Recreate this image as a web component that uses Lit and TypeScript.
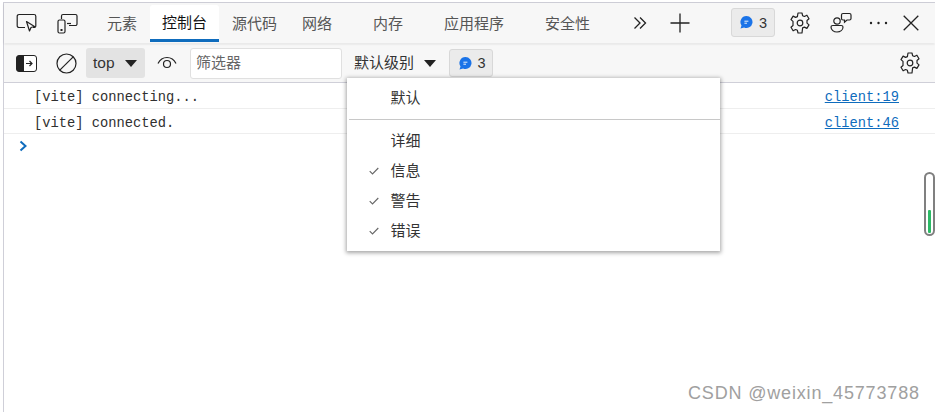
import { LitElement, html, css } from "lit";
import { customElement } from "lit/decorators.js";

const gear = html`<svg class="ic" width="22" height="22" viewBox="0 0 22 22" fill="none" stroke="#222" stroke-width="1.2"><path d="M9 1h4l.6 2.700 1.800.8 2.500-1.300 2.100 3.500-2 1.800v2.600l2 1.800-2.100 3.500-2.500-1.300-1.800.8L13 21H9l-.6-2.700-1.800-.8-2.500 1.300-2.100-3.500 2-1.800V9.400l-2-1.800 2.100-3.500 2.500 1.300 1.800-.8z" stroke-linejoin="round"/><circle cx="11" cy="11" r="2.800"/></svg>`;
const bubble = html`<svg width="13" height="13" viewBox="0 0 13 13"><path d="M6.500 0a6 6 0 1 1-2.400 11.500L.5 12.600l1-3.200A6 6 0 0 1 6.500 0z" fill="#1a73e8"/><path d="M4.400 5.200h4M4.400 7.200h2.600" stroke="#fff" stroke-width=".9"/></svg>`;
const check = html`<svg class="check" width="10" height="8" viewBox="0 0 10 8" fill="none" stroke="#666" stroke-width="1.100"><path d="M.7 4.200l2.800 2.800L9.300 1"/></svg>`;

@customElement("app-root")
export class AppRoot extends LitElement {
  static styles = css`
    :host { display: block; width: 935px; height: 412px; position: relative; overflow: hidden; background: #fff;
      font-family: "Noto Sans CJK SC", "Liberation Sans", sans-serif; color: #222; }
    .frame { margin: 2px 0 0 3px; height: 410px; border-top: 1px solid #cfcfd8; border-left: 1px solid #cfcfd8; display: flex; flex-direction: column; box-sizing: border-box; }
    .tabbar { height: 40px; flex: none; background: #f7f7f7; display: flex; align-items: flex-end; box-shadow: 0 1px 2px rgba(0,0,0,.12); position: relative; z-index: 1; }
    .tb-left { display: flex; align-self: center; gap: 20px; padding-left: 12px; width: 79px; box-sizing: border-box; margin-right: 12px; }
    .tab { height: 37px; margin-bottom: 1px; box-sizing: border-box; padding: 0 12px 2px; margin-right: 1px; display: flex; align-items: center; font-size: 15px; line-height: 20px; color: #555; white-space: nowrap; }
    .tab.net { margin-right: 0; padding-right: 20.5px; }
    .tab.wide { padding: 0 20.5px 2px; margin-right: 0; }
    .tab.active { background: #fff; color: #111; border-bottom: 3px solid #0f6cbd; border-radius: 3px 3px 0 0; padding-bottom: 0; }
    .tb-right { display: flex; align-self: stretch; align-items: center; flex: 1; position: relative; padding-bottom: 1px; box-sizing: border-box; }
    .more { margin-left: 22px; }
    .plus { margin-left: 23px; }
    .counter { display: inline-flex; align-items: center; gap: 6px; box-sizing: border-box; height: 29px; background: #ebebeb; border: 1px solid #d8d8d8; border-radius: 3px; font: 14.5px "Liberation Sans", sans-serif; padding: 0 0 0 8.500px; color: #333; }
    .counter.top { width: 44px; margin-left: 41px; }
    .r1 { margin-left: 14px; display: block; }
    .r2 { margin-left: 19px; display: block; }
    .r3 { margin-left: 17px; display: block; }
    .r4 { margin-left: 15px; display: block; }
    .toolbar { height: 38px; flex: none; margin-top: 1px; background: #f7f7f7; border-bottom: 1px solid #cfcfd8; display: flex; align-items: center; position: relative; }
    .ic { display: block; flex: none; }
    .t1 { margin-left: 12px; }
    .t2 { margin-left: 19px; }
    .top-sel { margin-left: 9px; width: 59px; height: 30px; background: #e3e3e3; border-radius: 3px; display: flex; align-items: center; box-sizing: border-box; padding-left: 7px; font: 15.5px "Liberation Sans", sans-serif; color: #333; }
    .arrow { width: 0; height: 0; border-left: 6px solid transparent; border-right: 6px solid transparent; border-top: 7px solid #222; display: inline-block; }
    .top-sel .arrow { margin-left: 10px; }
    .eye { margin-left: 12px; }
    .filter { margin-left: 13px; width: 152px; height: 31px; box-sizing: border-box; background: #fff; border: 1px solid #e0e0e0; border-radius: 3px; font-size: 15px; line-height: 20px; color: #666; display: flex; align-items: center; padding: 0 0 2px 5px; }
    .level { margin-left: 12px; font-size: 15px; line-height: 20px; color: #333; display: flex; align-items: center; padding-bottom: 2px; }
    .level .arrow { margin-left: 10px; margin-top: 3px; }
    .counter.low { width: 44px; height: 28px; margin-left: 13px; }
    .cog2 { margin-left: auto; margin-right: 14px; }
    .log { flex: 1; position: relative; font: 13.750px "Liberation Mono", monospace; color: #303030; }
    .row { height: 25px; box-sizing: border-box; border-bottom: 1px solid #eee; display: flex; align-items: center; justify-content: space-between; padding: 4px 36px 0 30px; }
    .row.one { height: 26px; }
    .row a { color: #0f6cbd; text-decoration: underline; }
    .prompt { display: block; margin: 6px 0 0 15px; }
    .scroll { position: absolute; right: 0; top: 89px; width: 11px; height: 64px; box-sizing: border-box; border: 2px solid #808080; border-radius: 6px; background: #fff; padding: 36px 2px 1px; }
    .scroll div { height: 100%; background: #2cba66; border-radius: 1px; }
    .menu { position: absolute; left: 347px; top: 78px; width: 373px; height: 173px; background: #fff; box-shadow: 0 1px 4px 1px rgba(0,0,0,.35); z-index: 5; font-size: 15px; line-height: 20px; color: #333; }
    .item { height: 30px; display: flex; align-items: center; position: relative; padding: 0 0 2px 43.5px; box-sizing: border-box; }
    .check { position: absolute; left: 22px; top: 11px; }
    .sep { height: 1px; background: #c8c8c8; margin: 6px 0 6px 2px; }
    .first { margin-top: 5px; }
    .wm { position: absolute; left: 688px; top: 383px; font: 18px "Liberation Sans", sans-serif; color: #a0a0a0; letter-spacing: .83px; z-index: 6; white-space: nowrap; }
  `;

  render() {
    return html`
      <div class="frame">
        <div class="tabbar">
          <div class="tb-left">
            <svg class="ic" width="21" height="19" viewBox="0 0 21 19" fill="none" stroke="#222" stroke-width="1.200"><path d="M9 14.500H3A1.800 1.800 0 0 1 1.200 12.700V3.300A1.800 1.800 0 0 1 3 1.500h15a1.800 1.800 0 0 1 1.800 1.800v9.400A1.800 1.800 0 0 1 18 14.500h-1"/><path d="M10.500 8.500l8 5-3.500 1-1.500 3.500z" fill="#f7f7f7" stroke-linejoin="round"/></svg>
            <svg class="ic" width="21" height="21" viewBox="0 0 21 21" fill="none" stroke="#222" stroke-width="1.200"><path d="M4.500 6V3a1.500 1.500 0 0 1 1.500-1.500h12.500A1.500 1.500 0 0 1 20 3v8a1.500 1.500 0 0 1-1.500 1.500H12"/><rect x="1" y="7" width="7" height="13" rx="1.500"/><path d="M10 10.500h4"/><rect x="3.500" y="16" width="2" height="2" fill="#222" stroke="none"/></svg>
          </div>
          <div class="tab">元素</div>
          <div class="tab active">控制台</div>
          <div class="tab">源代码</div>
          <div class="tab net">网络</div>
          <div class="tab wide">内存</div>
          <div class="tab wide">应用程序</div>
          <div class="tab wide">安全性</div>
          <div class="tb-right">
            <svg class="ic more" width="14" height="14" viewBox="0 0 14 14" fill="none" stroke="#222" stroke-width="1.300"><path d="M1.500 1.500L7 7l-5.500 5.500M7 1.500L12.500 7 7 12.500"/></svg>
            <svg class="ic plus" width="20" height="20" viewBox="0 0 20 20" fill="none" stroke="#222" stroke-width="1.300"><path d="M10 .5v19M.5 10h19"/></svg>
            <div class="counter top">${bubble}<span>3</span></div>
            <span class="r1">${gear}</span>
            <svg class="ic r2" width="22" height="22" viewBox="0 0 22 22" fill="none" stroke="#222" stroke-width="1.200"><circle cx="7" cy="9" r="3.200"/><path d="M1 15c0-1 .8-1.500 1.800-1.500h8.400c1 0 1.800.5 1.800 1.500 0 3-2.700 5-6 5s-6-2-6-5z"/><path d="M11.500 3A1.500 1.500 0 0 1 13 1.500h6.500A1.500 1.500 0 0 1 21 3v3.500A1.500 1.500 0 0 1 19.500 8h-2.500l-2.500 2.200V8H13a1.500 1.500 0 0 1-1.500-1.500z"/></svg>
            <svg class="ic r3" width="19" height="4" viewBox="0 0 19 4" fill="#222"><circle cx="2" cy="2" r="1.200"/><circle cx="9.500" cy="2" r="1.200"/><circle cx="17" cy="2" r="1.200"/></svg>
            <svg class="ic r4" width="16" height="16" viewBox="0 0 16 16" fill="none" stroke="#222" stroke-width="1.300"><path d="M.7.700l14.600 14.600M15.300.700L.7 15.300"/></svg>
          </div>
        </div>
        <div class="toolbar">
          <svg class="ic t1" width="21" height="17" viewBox="0 0 21 17"><rect x=".5" y=".5" width="20" height="16" rx="2.500" fill="#fff" stroke="#222"/><path d="M3 .5h5v16H3A2.500 2.500 0 0 1 .5 14V3A2.500 2.500 0 0 1 3 .5z" fill="#222"/><path d="M10 8.500h6M13.500 6l2.500 2.500-2.500 2.500" fill="none" stroke="#222" stroke-width="1.200"/></svg>
          <svg class="ic t2" width="21" height="21" viewBox="0 0 21 21" fill="none" stroke="#222" stroke-width="1.200"><circle cx="10.500" cy="10.500" r="9.500"/><path d="M3.800 17.200L17.200 3.800"/></svg>
          <div class="top-sel">top<span class="arrow"></span></div>
          <svg class="ic eye" width="20" height="14" viewBox="0 0 20 14" fill="none" stroke="#222" stroke-width="1.200"><path d="M1 7.500C3 3.500 6 1.500 10 1.500s7 2 9 6"/><circle cx="10" cy="8" r="3.500"/></svg>
          <div class="filter">筛选器</div>
          <div class="level">默认级别<span class="arrow"></span></div>
          <div class="counter low">${bubble}<span>3</span></div>
          <span class="cog2">${gear}</span>
        </div>
        <div class="log">
          <div class="row one"><span>[vite] connecting...</span><a>client:19</a></div>
          <div class="row"><span>[vite] connected.</span><a>client:46</a></div>
          <svg class="prompt" width="9" height="12" viewBox="0 0 9 12" fill="none" stroke="#0f6cbd" stroke-width="2"><path d="M1.500 1.500L6.500 6l-5 4.500"/></svg>
          <div class="scroll"><div></div></div>
        </div>
      </div>
      <div class="menu">
        <div class="item first">默认</div>
        <div class="sep"></div>
        <div class="item">详细</div>
        <div class="item">${check}信息</div>
        <div class="item">${check}警告</div>
        <div class="item">${check}错误</div>
      </div>
      <div class="wm">CSDN @weixin_45773788</div>
    `;
  }
}
